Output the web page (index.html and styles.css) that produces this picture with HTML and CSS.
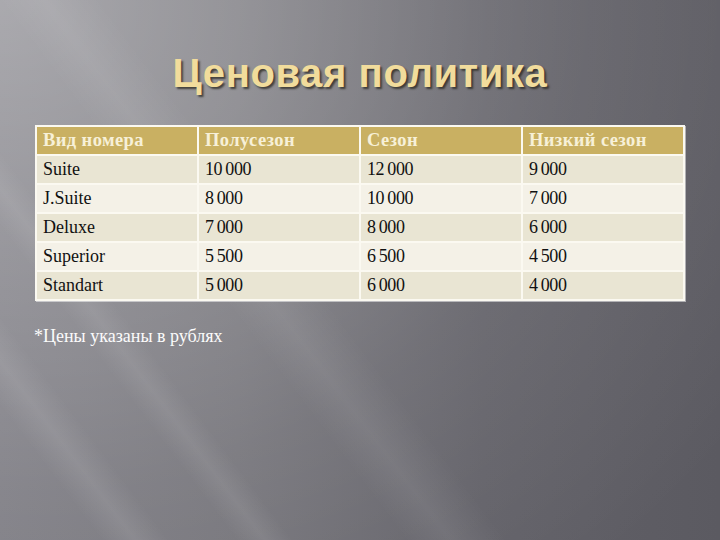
FILE: index.html
```html
<!DOCTYPE html>
<html lang="ru">
<head>
<meta charset="utf-8">
<link rel="stylesheet" href="styles.css">
</head>
<body>
<div class="slide">
  <h1 class="title">Ценовая политика</h1>
  <table class="prices">
    <thead>
      <tr><th>Вид номера</th><th>Полусезон</th><th>Сезон</th><th>Низкий сезон</th></tr>
    </thead>
    <tbody>
      <tr class="dark"><td>Suite</td><td class="num">10 000</td><td class="num">12 000</td><td class="num">9 000</td></tr>
      <tr class="light"><td>J.Suite</td><td class="num">8 000</td><td class="num">10 000</td><td class="num">7 000</td></tr>
      <tr class="dark"><td>Deluxe</td><td class="num">7 000</td><td class="num">8 000</td><td class="num">6 000</td></tr>
      <tr class="light"><td>Superior</td><td class="num">5 500</td><td class="num">6 500</td><td class="num">4 500</td></tr>
      <tr class="dark"><td>Standart</td><td class="num">5 000</td><td class="num">6 000</td><td class="num">4 000</td></tr>
    </tbody>
  </table>
  <p class="note">*Цены указаны в рублях</p>
</div>
</body>
</html>
```
FILE: styles.css
```css
html, body {
  margin: 0;
  padding: 0;
}
body {
  width: 720px;
  height: 540px;
  overflow: hidden;
}
.slide {
  width: 720px;
  height: 540px;
  box-sizing: border-box;
  padding: 49px 35px 0 35px;
  background:
    linear-gradient(53deg, rgba(255,255,255,0) 9%, rgba(255,255,255,0.09) 12%, rgba(255,255,255,0) 15%,
      rgba(255,255,255,0) 21%, rgba(255,255,255,0.08) 23.5%, rgba(255,255,255,0) 26%,
      rgba(255,255,255,0) 36%, rgba(255,255,255,0.07) 40%, rgba(255,255,255,0) 45%),
    radial-gradient(ellipse 900px 760px at 0 0, rgba(255,255,255,0.35), rgba(255,255,255,0.2) 35%, rgba(255,255,255,0.08) 65%, rgba(255,255,255,0) 100%),
    linear-gradient(90deg, #7d7c83 0%, #747379 33%, #626168 67%, #5b5a61 100%);
}
.title {
  margin: 0;
  text-align: center;
  font-family: "Liberation Sans", Arial, sans-serif;
  font-weight: bold;
  font-size: 40px;
  line-height: 48px;
  color: #f1dc9c;
  text-shadow: 2px 2px 2px rgba(40,38,30,0.75);
  letter-spacing: 0.6px;
}
.prices {
  margin-top: 28px;
  width: 650px;
  border-collapse: collapse;
  table-layout: fixed;
  font-family: "Liberation Serif", "Times New Roman", serif;
  font-size: 18px;
  box-shadow: 1px 1px 0 rgba(255,255,255,0.5);
}
.prices th, .prices td {
  border: 2px solid #fbf9f1;
  padding: 0 0 0 6px;
  height: 27px;
  text-align: left;
  vertical-align: middle;
}
.prices th {
  background: #c9b062;
  color: #f7f0d8;
  font-weight: bold;
  font-size: 18.5px;
  letter-spacing: 0.4px;
}
.prices tr.dark td {
  background: #e9e5d3;
}
.prices tr.light td {
  background: #f4f1e7;
}
.prices td {
  color: #111;
}
.prices td.num {
  font-size: 18px;
  letter-spacing: -0.4px;
  word-spacing: -1px;
}
.note {
  margin: 25px 0 0 -1px;
  font-family: "Liberation Serif", "Times New Roman", serif;
  font-size: 18px;
  color: #fbfbfb;
}
```
